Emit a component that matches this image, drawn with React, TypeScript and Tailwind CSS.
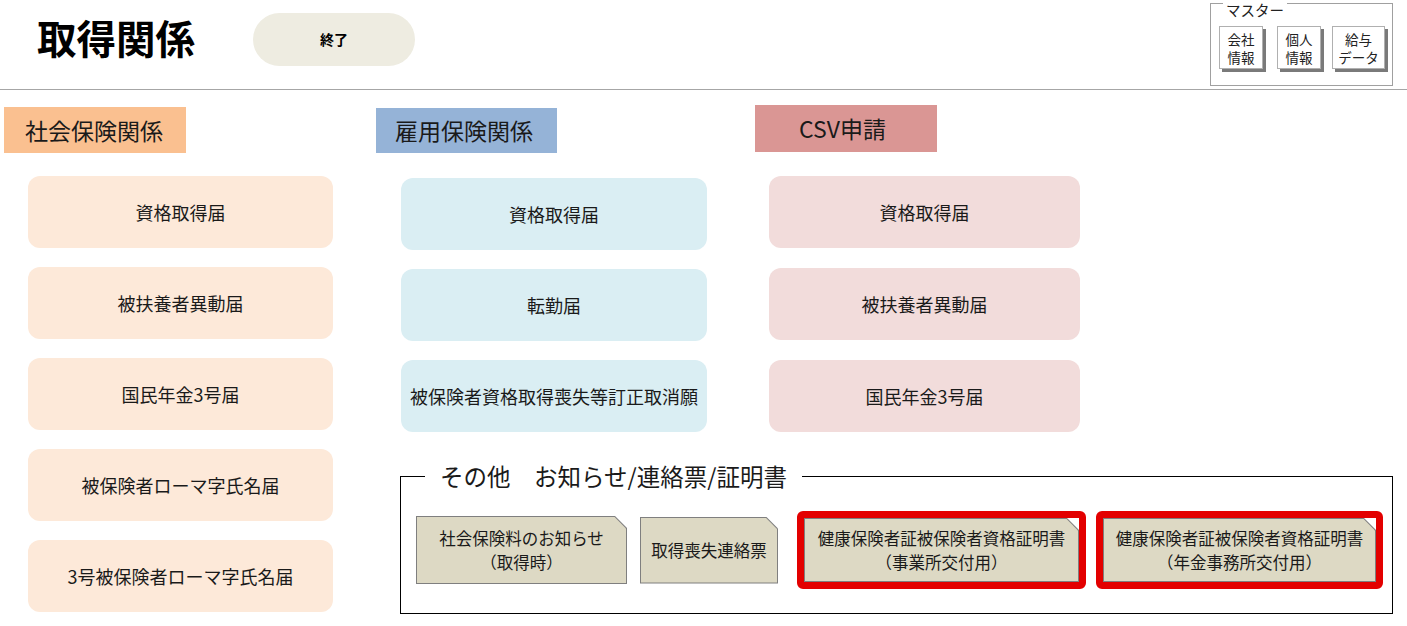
import React from 'react';

type Tone = 'shaho' | 'koyo' | 'csv';

const headerColors: Record<Tone, string> = {
  shaho: 'bg-[#fac090]',
  koyo: 'bg-[#95b3d7]',
  csv: 'bg-[#da9694]',
};

const buttonColors: Record<Tone, string> = {
  shaho: 'bg-[#fde9d9]',
  koyo: 'bg-[#daeef3]',
  csv: 'bg-[#f2dcdb]',
};

const shahoItems = [
  '資格取得届',
  '被扶養者異動届',
  '国民年金3号届',
  '被保険者ローマ字氏名届',
  '3号被保険者ローマ字氏名届',
];
const koyoItems = ['資格取得届', '転勤届', '被保険者資格取得喪失等訂正取消願'];
const csvItems = ['資格取得届', '被扶養者異動届', '国民年金3号届'];

function MenuButton({ label, tone, width }: { label: string; tone: Tone; width: string }) {
  return (
    <button
      className={`${buttonColors[tone]} ${width} h-[72px] rounded-[12px] flex items-center justify-center text-[18px] text-[#1a1a1a]`}
    >
      {label}
    </button>
  );
}

function SectionTitle({ label, tone, className }: { label: string; tone: Tone; className: string }) {
  return (
    <div className={`${headerColors[tone]} ${className} flex items-center text-[23px] text-[#1a1a1a]`}>
      {label}
    </div>
  );
}

// 右上が折れた書類型のボタン
function DocButton({ lines, className }: { lines: string[]; className: string }) {
  return (
    <div
      className={`${className} bg-[#7f7f7f] p-px [clip-path:polygon(0_0,calc(100%_-_12px)_0,100%_12px,100%_100%,0_100%)]`}
    >
      <div className="w-full h-full bg-[#ddd9c4] flex flex-col items-center justify-center text-[16.5px] leading-[24px] text-[#1a1a1a] [clip-path:polygon(0_0,calc(100%_-_11.4px)_0,100%_11.4px,100%_100%,0_100%)]">
        {lines.map((l) => (
          <span key={l}>{l}</span>
        ))}
      </div>
    </div>
  );
}

function MasterButton({ top, bottom, width }: { top: string; bottom: string; width: string }) {
  return (
    <button
      className={`${width} h-[43px] bg-white border border-[#b0b0b0] shadow-[3px_3px_0_#7a7a7a] flex flex-col items-center justify-center text-[13.5px] leading-[18px] text-[#222]`}
    >
      <span>{top}</span>
      <span>{bottom}</span>
    </button>
  );
}

export default function App() {
  return (
    <div className="w-[1407px] h-[626px] bg-white overflow-hidden font-['Noto_Sans_CJK_JP','Noto_Sans',sans-serif]">
      {/* ヘッダー */}
      <header className="h-[90px] border-b border-[#a6a6a6] flex items-start">
        <h1 className="ml-[37px] w-[216px] h-[73px] flex items-center text-[39.5px] font-bold text-black">
          取得関係
        </h1>
        <button className="mt-[13px] w-[162px] h-[53px] rounded-full bg-[#eeece1] text-[14px] font-bold text-black">
          終了
        </button>

        <div className="relative ml-auto mr-[14px] mt-[3px] w-[183px] h-[83px] border border-[#a0a0a0]">
          <span className="absolute left-[12px] top-[-3px] bg-white px-[3px] text-[14.5px] leading-[17px] text-[#222]">
            マスター
          </span>
          <div className="flex pl-[8px] pt-[22px]">
            <MasterButton top="会社" bottom="情報" width="w-[44px]" />
            <div className="ml-[14px]">
              <MasterButton top="個人" bottom="情報" width="w-[44px]" />
            </div>
            <div className="ml-[11px]">
              <MasterButton top="給与" bottom="データ" width="w-[53px]" />
            </div>
          </div>
        </div>
      </header>

      <main className="flex items-start">
        {/* 社会保険関係 */}
        <section className="ml-[4px] flex flex-col">
          <SectionTitle label="社会保険関係" tone="shaho" className="mt-[17px] w-[182px] h-[46px] pl-[21px]" />
          <div className="ml-[24px] mt-[23px] flex flex-col gap-[19px]">
            {shahoItems.map((item) => (
              <MenuButton key={item} label={item} tone="shaho" width="w-[305px]" />
            ))}
          </div>
        </section>

        <div className="ml-[43px] flex flex-col">
          <div className="flex items-start">
            {/* 雇用保険関係 */}
            <section className="flex flex-col">
              <SectionTitle label="雇用保険関係" tone="koyo" className="mt-[18px] w-[181px] h-[45px] pl-[19px]" />
              <div className="ml-[25px] mt-[25px] flex flex-col gap-[19px]">
                {koyoItems.map((item) => (
                  <MenuButton key={item} label={item} tone="koyo" width="w-[306px]" />
                ))}
              </div>
            </section>

            {/* CSV申請 */}
            <section className="ml-[48px] flex flex-col">
              <SectionTitle label="CSV申請" tone="csv" className="mt-[15px] w-[182px] h-[47px] pl-[44px]" />
              <div className="ml-[14px] mt-[24px] flex flex-col gap-[20px]">
                {csvItems.map((item) => (
                  <MenuButton key={item} label={item} tone="csv" width="w-[311px]" />
                ))}
              </div>
            </section>
          </div>

          {/* その他 */}
          <fieldset className="ml-[24px] mt-[29px] w-[993px] h-[153px] border border-black">
            <legend className="ml-[24px] px-[15px] h-[30px] text-[23.5px] leading-[30px] text-[#1a1a1a]">
              その他　お知らせ/連絡票/証明書
            </legend>
            <div className="flex items-center pl-[15px] pt-[20px] h-[98px]">
              <DocButton lines={['社会保険料のお知らせ', '（取得時）']} className="w-[211px] h-[68px]" />
              <DocButton lines={['取得喪失連絡票']} className="ml-[13px] w-[138px] h-[67px]" />
              <div className="ml-[19px] w-[289px] h-[78px] border-[7px] border-[#e30000] rounded-[6px]">
                <DocButton
                  lines={['健康保険者証被保険者資格証明書', '（事業所交付用）']}
                  className="w-full h-full"
                />
              </div>
              <div className="ml-[10px] w-[287px] h-[78px] border-[7px] border-[#e30000] rounded-[6px]">
                <DocButton
                  lines={['健康保険者証被保険者資格証明書', '（年金事務所交付用）']}
                  className="w-full h-full"
                />
              </div>
            </div>
          </fieldset>
        </div>
      </main>
    </div>
  );
}
